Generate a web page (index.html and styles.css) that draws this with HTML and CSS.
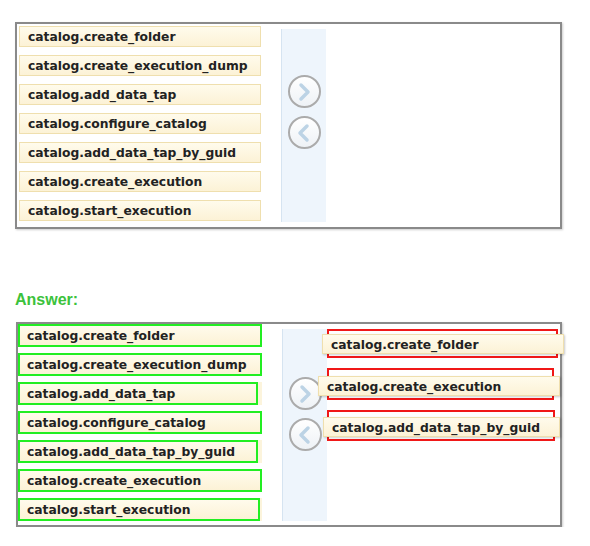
FILE: index.html
```html
<!DOCTYPE html>
<html lang="en">
<head>
    <meta charset="UTF-8">
    <title>Catalog procedures</title>
    <link rel="stylesheet" href="styles.css">
</head>
<body>
    <div class="panel">
        <div class="lista">
            <div class="item">catalog.create_folder</div>
            <div class="item">catalog.create_execution_dump</div>
            <div class="item">catalog.add_data_tap</div>
            <div class="item">catalog.configure_catalog</div>
            <div class="item">catalog.add_data_tap_by_guid</div>
            <div class="item">catalog.create_execution</div>
            <div class="item">catalog.start_execution</div>
        </div>
        <div class="flechas">
            <span class="circulo">
                <svg width="28" height="28" viewBox="0 0 28 28"><path d="M11 7 L18 14 L11 21" fill="none" stroke="#bcd3e5" stroke-width="3.5" stroke-linecap="round" stroke-linejoin="round"/></svg>
            </span>
            <span class="circulo">
                <svg width="28" height="28" viewBox="0 0 28 28"><path d="M17 7 L10 14 L17 21" fill="none" stroke="#bcd3e5" stroke-width="3.5" stroke-linecap="round" stroke-linejoin="round"/></svg>
            </span>
        </div>
        <div class="destino"></div>
    </div>

    <h3 class="respuesta">Answer:</h3>

    <div class="panel panel-resp">
        <div class="lista lista-resp">
            <div class="item marcado">catalog.create_folder</div>
            <div class="item marcado">catalog.create_execution_dump</div>
            <div class="item marcado corto">catalog.add_data_tap</div>
            <div class="item marcado">catalog.configure_catalog</div>
            <div class="item marcado corto">catalog.add_data_tap_by_guid</div>
            <div class="item marcado">catalog.create_execution</div>
            <div class="item marcado medio">catalog.start_execution</div>
        </div>
        <div class="flechas flechas-resp">
            <span class="circulo">
                <svg width="28" height="28" viewBox="0 0 28 28"><path d="M11 7 L18 14 L11 21" fill="none" stroke="#bcd3e5" stroke-width="3.5" stroke-linecap="round" stroke-linejoin="round"/></svg>
            </span>
            <span class="circulo">
                <svg width="28" height="28" viewBox="0 0 28 28"><path d="M17 7 L10 14 L17 21" fill="none" stroke="#bcd3e5" stroke-width="3.5" stroke-linecap="round" stroke-linejoin="round"/></svg>
            </span>
        </div>
        <div class="destino destino-resp">
            <div class="zona"><div class="item suelto">catalog.create_folder</div></div>
            <div class="zona zona-2"><div class="item suelto">catalog.create_execution</div></div>
            <div class="zona zona-3"><div class="item suelto">catalog.add_data_tap_by_guid</div></div>
        </div>
    </div>
</body>
</html>
```

FILE: styles.css
```css
body {
    margin: 0;
    background: white;
    font-family: 'DejaVu Sans', sans-serif;
}
.panel {
    display: flex;
    width: 543px;
    height: 203px;
    margin: 22px 0 0 15px;
    border: 2px solid #8a8a8a;
    background: white;
    box-shadow: 1px 1px 2px rgba(0, 0, 0, 0.2);
}
.lista {
    display: flex;
    flex-direction: column;
    gap: 8px;
    padding: 2px 0 0 2px;
}
.item {
    box-sizing: border-box;
    width: 242px;
    height: 21px;
    padding-left: 8px;
    line-height: 21px;
    font-size: 12.3px;
    font-weight: bold;
    color: #222;
    background: linear-gradient(#fffbec, #fcf2d6);
    border: 1px solid #efdfae;
    white-space: nowrap;
}
.flechas {
    display: flex;
    flex-direction: column;
    align-items: center;
    gap: 8px;
    box-sizing: border-box;
    width: 45px;
    height: 193px;
    margin: 5px 0 0 20px;
    padding-top: 46px;
    background: #eef5fc;
    border-left: 1px solid #d6e4f1;
}
.circulo {
    display: flex;
    align-items: center;
    justify-content: center;
    box-sizing: border-box;
    width: 33px;
    height: 33px;
    border: 2px solid #ababab;
    border-radius: 50%;
    background: linear-gradient(#ffffff, #eef2f6);
}
.destino {
    flex: 1;
}
.respuesta {
    margin: 62px 0 0 15px;
    font-family: 'Liberation Sans', Arial, sans-serif;
    font-size: 16px;
    line-height: 18px;
    color: #3cc23c;
}
.panel-resp {
    width: 542px;
    height: 201px;
    margin: 13px 0 0 16px;
}
.lista-resp {
    gap: 6px;
    padding: 0;
}
.marcado {
    width: 244px;
    height: 23px;
    line-height: 21px;
    padding-left: 7px;
    border: 2px solid #22ee22;
}
.corto {
    width: 240px;
    box-shadow: 4px 0 0 #fcf4dc;
}
.medio {
    width: 242px;
    box-shadow: 2px 0 0 #fcf4dc;
}
.flechas-resp {
    height: 192px;
    margin: 5px 0 0 20px;
    padding-top: 48px;
}
.destino-resp {
    display: flex;
    flex-direction: column;
    gap: 10px;
    padding: 5px 0 0 0;
}
.zona {
    position: relative;
    box-sizing: border-box;
    width: 231px;
    height: 29px;
    border: 2px solid #f01818;
}
.zona-2 {
    width: 227px;
    height: 32px;
}
.zona-3 {
    width: 228px;
    height: 31px;
}
.suelto {
    position: absolute;
    left: -7px;
    top: 3px;
    height: 20px;
    width: 242px;
    line-height: 20px;
    box-shadow: 1px 1px 2px rgba(0, 0, 0, 0.2);
}
.zona-2 .suelto {
    left: -11px;
    top: 6px;
}
.zona-3 .suelto {
    left: -6px;
    top: 5px;
    width: 237px;
}
```
